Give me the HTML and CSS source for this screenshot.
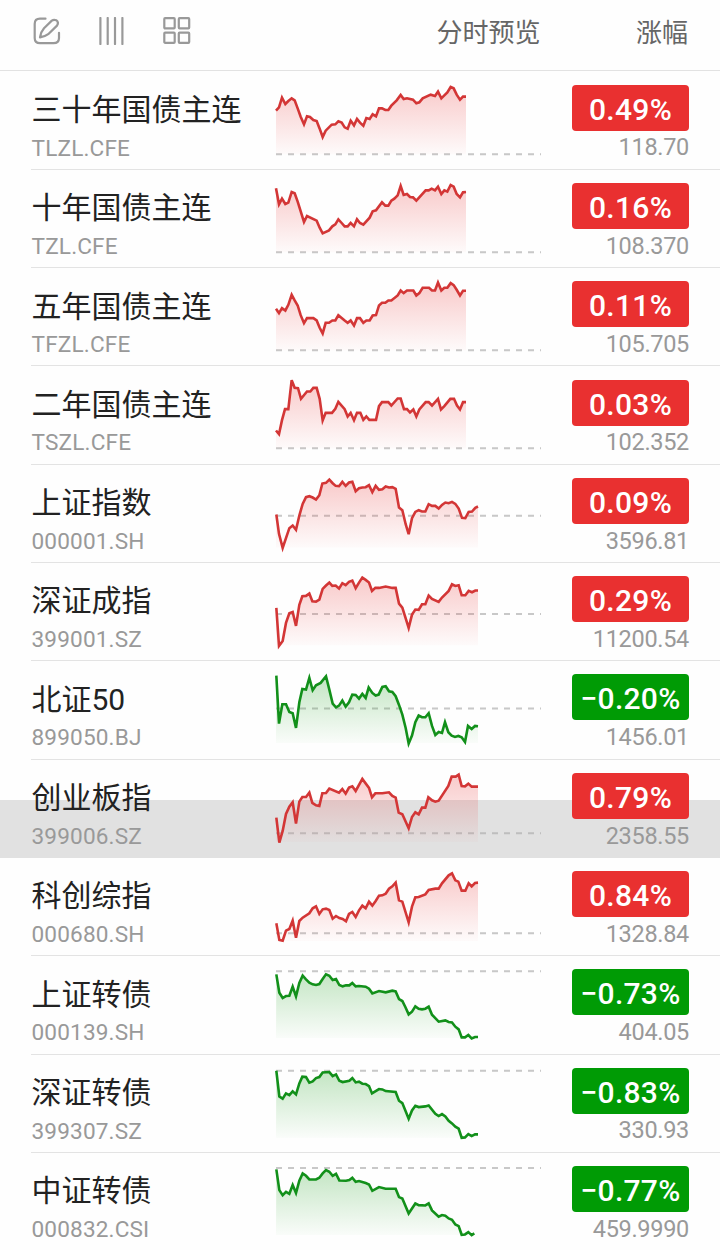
FILE: index.html
```html
<!DOCTYPE html>
<html lang="zh-CN">
<head>
<meta charset="utf-8">
<title>自选行情</title>
<link rel="stylesheet" href="styles.css">
</head>
<body>
<header class="toolbar">
  <div class="tools">
    <svg class="tool" width="28" height="28" viewBox="0 0 28 28"><path d="M12.5 1.7H7Q1.7 1.7 1.7 7V21Q1.7 26.2 7 26.2H20.5Q26 26.2 26 21V15.8"/><path d="M7 20.3Q8 14.5 11 11.2L18.8 3.6Q20.7 2.2 23.2 3.2Q26.2 5.4 24 8.6L15.2 17.2Q12.5 19.2 7 20.3Z"/></svg>
    <svg class="tool" width="28" height="28" viewBox="0 0 28 28"><path d="M2.4 1V27M9.7 1V27M17 1V27M24.4 1V27"/></svg>
    <svg class="tool" width="28" height="28" viewBox="0 0 28 28"><rect x="1.3" y="1.2" width="10.4" height="10.2" rx=".8"/><rect x="15.8" y="1.2" width="10.4" height="10.2" rx=".8"/><rect x="1.3" y="15.6" width="10.4" height="10.2" rx=".8"/><rect x="15.8" y="15.6" width="10.4" height="10.2" rx=".8"/></svg>
  </div>
  <span class="head-chart">分时预览</span>
  <span class="head-change">涨幅</span>
</header>
<svg class="defs" width="0" height="0" aria-hidden="true">
  <linearGradient id="up" x1="0" y1="30" x2="0" y2="245" gradientUnits="userSpaceOnUse"><stop offset="0" stop-color="#e93030" stop-opacity=".27"/><stop offset="1" stop-color="#e93030" stop-opacity=".02"/></linearGradient>
  <linearGradient id="down" x1="0" y1="30" x2="0" y2="245" gradientUnits="userSpaceOnUse"><stop offset="0" stop-color="#109a10" stop-opacity=".27"/><stop offset="1" stop-color="#109a10" stop-opacity=".02"/></linearGradient>
</svg>
<main class="list" id="list"></main>
<script src="app.js"></script>
</body>
</html>
```
FILE: styles.css
```css
* { box-sizing: border-box; }
body {
  margin: 0;
  width: 720px;
  height: 1250px;
  overflow: hidden;
  background: #fefefe;
  font-family: Roboto, "Noto Sans CJK SC", sans-serif;
}
.toolbar {
  display: grid;
  grid-template-columns: 404px 104px 1fr;
  align-items: center;
  height: 71px;
  padding: 0 32px 9px 32.6px;
  border-bottom: 1px solid #e2e2e2;
  font-size: 26px;
  line-height: 36px;
  color: #666;
}
.tools { display: flex; gap: 37px; }
.tool { display: block; fill: none; stroke: #999; stroke-width: 2.2; stroke-linecap: round; stroke-linejoin: round; }
.head-chart, .head-change { white-space: nowrap; padding-top: 4px; }
.head-change { text-align: right; }
.defs { display: block; }
.list { margin-top: .6px; }
.row {
  display: grid;
  grid-template-columns: 245px 265px 1fr;
  height: 98.3px;
  padding: 0 31px;
  background: linear-gradient(#e3e3e3, #e3e3e3) 31px 100% / 689px 1px no-repeat;
}
.row.pressed { background: linear-gradient(transparent 40.3px, #e1e1e1 40.3px); }
.name {
  margin-top: 16.4px;
  padding-left: .5px;
  font-size: 30px;
  line-height: 44px;
  color: #222;
  white-space: nowrap;
}
.code {
  margin-top: 2.6px;
  padding-left: .5px;
  font-size: 22.6px;
  line-height: 28px;
  letter-spacing: .15px;
  color: #999;
}
.chart { display: block; overflow: visible; }
.line { fill: none; stroke-width: 7.8; stroke-linejoin: miter; }
.base { stroke: #aaa; stroke-opacity: .65; stroke-width: 6; stroke-dasharray: 18 18; }
.up .line { stroke: #d33636; }
.down .line { stroke: #12901a; }
.up .area { fill: url(#up); }
.down .area { fill: url(#down); }
.quote { display: flex; flex-direction: column; align-items: flex-end; padding-top: 13.1px; }
.badge {
  width: 117px;
  height: 46px;
  border-radius: 4px;
  font-size: 30px;
  font-weight: 500;
  line-height: 50px;
  letter-spacing: .3px;
  text-align: center;
  color: #fff;
}
.up .badge { background: #e93030; }
.down .badge { background: #009b05; }
.price { margin-top: 2.8px; font-size: 23.5px; line-height: 28px; color: #999; letter-spacing: -.3px; }
```
FILE: app.js
```js
// pts and base are in thirds of a pixel; dy aligns the series with its row.
const rows = [
  { name: "三十年国债主连", code: "TLZL.CFE", pct: "0.49%", price: "118.70", dy: 10, base: 237, floor: 237,
    pts: "18,106 27,96 36,67 46,86 55,77 65,69 74,75 83,99 92,124 102,147 111,123 120,125 130,134 140,137 149,160 158,185 167,166 185,148 196,147 205,138 215,142 224,156 233,160 242,136 252,150 261,131 270,142 280,151 289,128 299,131 308,117 318,123 327,99 336,99 346,104 355,104 364,91 380,75 392,59 401,71 411,69 429,73 439,84 448,81 458,69 482,58 495,62 504,49 514,69 523,60 532,51 542,35 551,39 560,58 570,73 579,64 588,64" },
  { name: "十年国债主连", code: "TZL.CFE", pct: "0.16%", price: "108.370", dy: 9, base: 238, floor: 238,
    pts: "18,46 27,94 36,77 46,93 55,89 65,57 74,61 83,86 102,147 111,129 140,143 149,164 158,181 177,172 187,160 196,154 205,139 215,150 224,160 233,160 242,150 252,160 261,139 270,150 280,155 299,134 308,115 318,112 336,88 346,98 355,98 364,83 373,77 383,67 392,39 401,66 411,63 420,72 429,73 439,83 467,52 476,52 485,47 495,52 504,41 514,63 523,52 532,56 542,36 551,41 560,63 570,73 579,58 588,57" },
  { name: "五年国债主连", code: "TFZL.CFE", pct: "0.11%", price: "105.705", dy: 8.4, base: 238, floor: 238,
    pts: "18,114 27,127 36,112 46,119 55,102 65,72 74,89 83,104 92,133 102,157 111,142 130,142 140,149 149,171 158,188 167,156 177,156 187,149 196,149 205,133 224,149 233,156 242,149 252,164 261,142 270,142 280,156 289,149 299,149 308,134 318,133 327,104 336,96 346,96 355,89 364,89 383,74 392,59 401,67 411,59 430,59 439,74 448,67 458,51 477,51 486,59 495,59 504,35 514,59 523,51 532,51 542,37 551,43 560,57 570,74 579,60 588,60" },
  { name: "二年国债主连", code: "TSZL.CFE", pct: "0.03%", price: "102.352", dy: 7.5, base: 239, floor: 239,
    pts: "18,186 27,197 36,155 45,122 55,122 65,35 74,58 84,59 93,91 111,69 121,69 130,58 140,58 149,91 158,156 167,133 186,133 196,121 205,100 224,122 233,144 242,133 252,155 261,133 271,133 280,154 289,144 298,154 318,154 327,113 336,101 355,101 364,111 383,90 392,90 402,122 411,122 420,132 430,123 439,144 448,123 467,101 476,101 486,111 504,91 513,123 523,113 541,91 552,91 561,111 570,123 579,101 588,101" },
  { name: "上证指数", code: "000001.SH", pct: "0.09%", price: "3596.81", dy: 9.6, base: 143, floor: 238,
    pts: "19,139 27,197 38,239 58,180 68,172 78,185 88,142 98,107 108,87 118,84 128,88 138,94 148,81 157,46 168,44 178,34 188,45 197,53 207,54 217,41 227,53 237,43 247,41 257,69 267,60 277,58 287,57 297,51 307,72 317,53 327,65 337,63 347,55 357,58 367,57 377,62 387,118 397,126 407,168 416,198 426,150 436,131 446,126 456,130 466,130 476,108 486,113 496,113 506,121 516,110 526,103 536,105 546,101 556,107 566,121 576,149 586,150 596,131 606,130 616,119 624,115" },
  { name: "深证成指", code: "399001.SZ", pct: "0.29%", price: "11200.54", dy: 8.7, base: 144, floor: 238,
    pts: "19,126 27,240 38,225 48,171 58,142 68,138 78,180 88,117 97,91 108,90 118,83 127,106 138,107 148,101 158,69 168,59 178,50 187,60 197,59 207,68 217,52 227,58 237,48 247,44 257,67 267,50 277,35 287,42 297,50 306,75 316,66 327,66 347,62 367,66 377,66 387,113 397,125 416,186 426,146 436,131 446,132 456,115 466,115 476,89 486,99 506,108 516,95 536,75 546,55 556,60 566,58 575,88 586,88 596,75 606,79 616,74 624,74" },
  { name: "北证50", code: "899050.BJ", pct: "−0.20%", price: "1456.01", down: true, dy: 7.8, base: 135, floor: 238,
    pts: "19,36 27,180 37,122 48,122 58,145 68,149 78,193 88,116 97,76 108,78 118,43 128,80 138,65 152,58 168,38 178,78 188,120 198,131 207,126 217,111 227,129 237,116 247,93 257,94 267,105 277,91 287,103 296,72 307,88 317,96 326,93 337,70 347,68 357,83 367,85 377,98 387,124 397,153 407,193 416,240 426,216 436,176 446,156 456,161 466,161 476,149 486,187 496,214 506,205 516,208 525,176 535,206 545,216 555,220 565,217 575,221 585,235 594,187 605,196 615,187 624,188" },
  { name: "创业板指", code: "399006.SZ", pct: "0.79%", price: "2358.55", pressed: true, dy: 6.9, base: 213, floor: 239,
    pts: "19,166 28,241 38,206 48,155 58,133 68,120 78,184 88,118 97,104 108,104 118,91 127,122 138,129 148,131 157,93 168,92 178,79 207,91 217,80 227,94 237,76 247,72 257,86 277,50 297,77 306,105 316,93 337,93 357,90 367,101 377,106 386,151 397,156 416,198 426,164 436,150 446,156 456,136 466,136 475,105 486,114 496,118 506,115 535,71 545,43 557,43 566,37 575,71 585,72 595,64 605,73 624,73" },
  { name: "科创综指", code: "000680.SH", pct: "0.84%", price: "1328.84", dy: 6, base: 220, floor: 243,
    pts: "19,190 28,240 38,242 48,212 58,207 68,182 78,233 88,183 98,173 118,160 128,145 138,139 148,162 158,148 168,146 178,150 188,176 198,168 208,174 218,177 228,184 237,162 247,156 257,171 267,151 277,137 287,145 297,125 307,137 317,123 327,107 337,106 347,101 357,86 367,79 377,68 387,121 397,125 416,187 426,140 436,112 446,111 466,103 476,90 496,86 506,86 516,70 536,46 546,40 556,61 565,65 575,92 586,92 596,70 605,79 615,69 624,68" },
  { name: "上证转债", code: "000139.SH", pct: "−0.73%", price: "404.05", down: true, dy: 5.1, base: 41, floor: 241,
    pts: "19,50 28,105 38,121 48,115 58,114 68,87 78,116 88,76 98,54 108,65 118,75 128,80 138,82 148,79 158,64 168,50 178,54 188,67 198,64 208,82 218,86 228,83 238,83 247,76 257,86 267,85 287,87 297,93 307,107 327,100 347,104 367,99 377,101 387,124 397,130 406,148 416,170 426,162 436,146 446,153 456,155 466,153 476,147 486,171 506,192 526,188 536,193 546,194 556,207 566,215 575,239 585,239 595,232 605,242 615,238 624,238" },
  { name: "深证转债", code: "399307.SZ", pct: "−0.83%", price: "330.93", down: true, dy: -289.8, base: 337, floor: 538,
    pts: "19,337 28,414 38,421 48,405 58,410 68,399 78,408 88,375 97,355 108,356 118,373 128,369 138,359 148,356 158,342 178,341 188,353 198,348 208,367 218,371 238,367 247,359 257,372 267,370 277,376 287,377 297,383 306,405 327,392 337,393 347,398 377,401 387,427 397,434 416,481 426,456 436,442 446,446 466,444 476,441 496,466 506,473 516,467 526,474 536,487 546,495 556,505 566,511 575,538 585,537 595,527 605,533 615,528 624,528" },
  { name: "中证转债", code: "000832.CSI", pct: "−0.77%", price: "459.9990", down: true, dy: -584.7, base: 630, floor: 831,
    pts: "19,634 28,696 38,711 48,701 58,707 68,681 78,705 88,668 98,646 108,653 118,664 138,664 148,659 158,646 168,636 178,641 188,653 198,647 208,667 228,668 238,666 247,659 257,671 267,669 287,675 297,679 307,698 327,687 347,692 377,692 387,717 397,721 416,766 426,751 436,736 446,741 466,742 476,736 486,757 506,776 516,771 526,773 536,781 546,785 556,799 566,804 575,830 585,829 595,822 605,831 613,826" }
];

document.getElementById("list").innerHTML = rows.map(r => {
  const xs = r.pts.split(" ");
  const last = xs[xs.length - 1].split(",")[0];
  const pts = xs.map(p => {
    const [x, y] = p.split(",").map(Number);
    return x + "," + (y + r.dy).toFixed(1);
  }).join(" ");
  const base = r.base + r.dy;
  const floor = r.floor + r.dy;
  return `<section class="row ${r.down ? "down" : "up"}${r.pressed ? " pressed" : ""}">
    <div><div class="name">${r.name}</div><div class="code">${r.code}</div></div>
    <svg class="chart" width="265" height="98" viewBox="18 0 795 294">
      <line class="base" x1="18" x2="813" y1="${base}" y2="${base}"/>
      <polygon class="area" points="18,${floor} ${pts} ${last},${floor}"/>
      <polyline class="line" points="${pts}"/>
    </svg>
    <div class="quote"><div class="badge">${r.pct}</div><div class="price">${r.price}</div></div>
  </section>`;
}).join("");
```
